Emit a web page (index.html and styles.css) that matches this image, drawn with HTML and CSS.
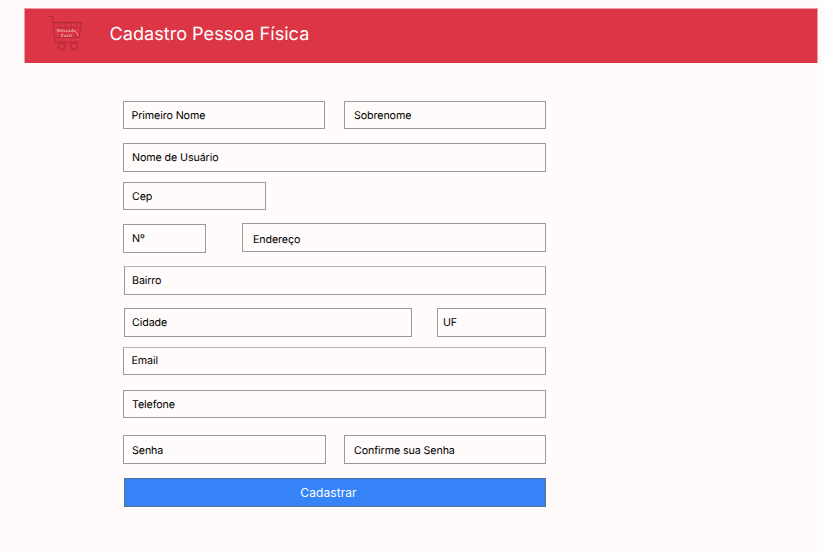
FILE: index.html
```html
<!DOCTYPE html>
<html lang="pt-BR">
<head>
<meta charset="utf-8">
<title>Cadastro Pessoa Física</title>
<link rel="stylesheet" href="styles.css">
</head>
<body>
<header class="topbar">
  <svg class="cart" width="40" height="40" viewBox="0 0 40 40" fill="none" stroke="#b32b3b" aria-hidden="true">
    <path d="M3 2.500H7.300L10 28.300H34" stroke-width="1"/>
    <path d="M8.500 8.700H36.500L34 23.500H9.700" stroke-width="1.200"/>
    <path d="M14 9L15 23M20 9V23M26 9V23M31.500 9L30 23M9 13.500H35.500" stroke-width=".8"/>
    <circle cx="16.500" cy="32.200" r="3.200" stroke-width="1.200"/>
    <circle cx="29" cy="32.200" r="3.200" stroke-width="1.200"/>
    <path d="M30.500 17.500L33.500 21.500" stroke="#eeb0b6" stroke-width=".8"/>
    <text class="cart-text" x="21.500" y="18.200" text-anchor="middle">Mercado</text>
    <text class="cart-text" x="21.500" y="22.900" text-anchor="middle">Fácil</text>
  </svg>
  <h1 class="title">Cadastro Pessoa Física</h1>
</header>
<form class="form">
  <div class="row row-name">
    <div class="field first">Primeiro Nome</div>
    <div class="field last">Sobrenome</div>
  </div>
  <div class="row row-user"><div class="field user">Nome de Usuário</div></div>
  <div class="row row-cep"><div class="field cep">Cep</div></div>
  <div class="row row-address">
    <div class="field number">Nº</div>
    <div class="field street">Endereço</div>
  </div>
  <div class="row row-district"><div class="field district">Bairro</div></div>
  <div class="row row-city">
    <div class="field city">Cidade</div>
    <div class="field uf">UF</div>
  </div>
  <div class="row row-email"><div class="field email">Email</div></div>
  <div class="row row-phone"><div class="field phone">Telefone</div></div>
  <div class="row row-password">
    <div class="field password">Senha</div>
    <div class="field confirm">Confirme sua Senha</div>
  </div>
  <button class="submit" type="button">Cadastrar</button>
</form>
</body>
</html>
```
FILE: styles.css
```css
* { box-sizing: border-box; }

body {
  margin: 0;
  height: 553px;
  overflow: hidden;
  padding: 8px 5px 0 24px;
  background: #fffbfa;
  color: #000;
  font-family: Inter, "Liberation Sans", sans-serif;
  text-rendering: geometricPrecision;
}

.topbar {
  display: flex;
  height: 55px;
  padding: 5px 0 0 20px;
  background: #dc3545;
  border: solid #ed9aa2;
  border-width: 1px 1px 0 1px;
}

.cart { flex: none; }

.cart-text {
  font: bold 4.5px/1 "Liberation Serif", serif;
  letter-spacing: .3px;
  fill: #eeb0b6;
  stroke: none;
}

.title {
  margin: 8px 0 0 24.5px;
  font-size: 18.1px;
  line-height: 24px;
  font-weight: 400;
  letter-spacing: .01px;
  color: #fff;
}

.form {
  width: 423px;
  margin: 38px 0 0 99px;
  font-size: 10.7px;
  letter-spacing: -.1px;
}

.row {
  display: flex;
  justify-content: space-between;
}

.field {
  height: 29px;
  padding-left: 8px;
  border: 1px solid #9b9898;
  line-height: 27px;
  white-space: nowrap;
}

.row-name .field, .cep, .phone { height: 28px; }

.row-user { margin-top: 14px; }
.row-cep { margin-top: 10px; }
.row-address { margin-top: 13px; }
.row-district { margin-top: 13px; padding-left: 1px; }
.row-city { margin-top: 13px; padding-left: 1px; }
.row-email { margin-top: 10px; }
.row-phone { margin-top: 15px; }
.row-password { margin-top: 17px; }

.first { width: 202px; padding-left: 7.5px; }
.last { width: 202px; padding-left: 9px; }
.user, .district, .email, .phone { width: 100%; }
.cep { width: 143px; }
.number { width: 83px; margin-top: 1px; }
.street { width: 304px; padding-left: 10px; line-height: 31px; }
.district { padding-left: 7px; line-height: 27px; border-top-color: #b5b2b2; }
.city { width: 288px; padding-left: 7px; }
.uf { width: 109px; padding-left: 5px; }
.email { height: 28px; padding-left: 7.5px; line-height: 25px; border-top-color: #b5b2b2; }
.password { width: 203px; line-height: 29px; }
.confirm { width: 202px; padding-left: 9px; line-height: 29px; }

.submit {
  display: block;
  width: 422px;
  height: 29px;
  margin: 14px 0 0 1px;
  padding: 0 13px 0 0;
  border: 1px solid #5b6f91;
  background: #3583f6;
  color: #fff;
  font: 400 12px/27px Inter, "Liberation Sans", sans-serif;
  letter-spacing: .08px;
}
```
